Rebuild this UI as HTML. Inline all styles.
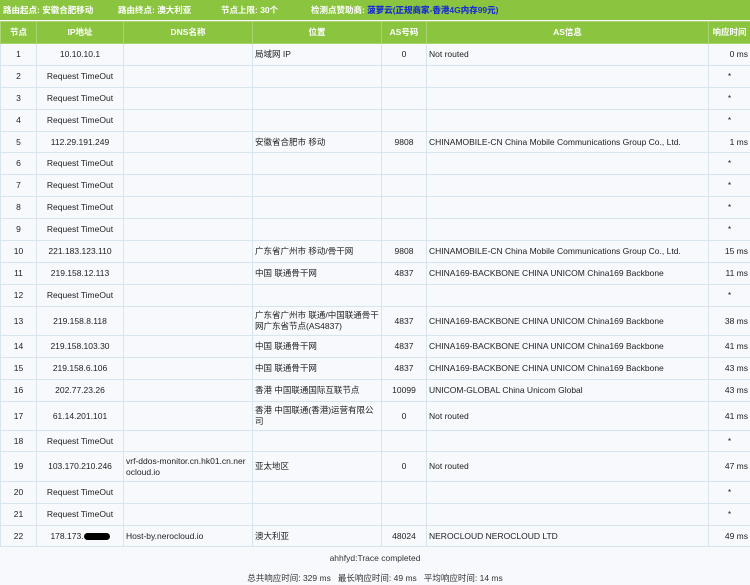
<!DOCTYPE html>
<html><head><meta charset="utf-8"><style>
body{margin:0;width:750px;height:585px;background:#f7f9fc;font-family:"Liberation Sans","Noto Sans CJK SC",sans-serif;font-size:8.5px;color:#222;overflow:hidden}
.top{height:20px;background:#8bc540;color:#fff;font-weight:bold;font-size:8.5px;line-height:20px;white-space:nowrap;border-bottom:1px solid #fff}
.top span{position:absolute;top:0}
.top b{color:#1a2fd0}
table{border-collapse:collapse;width:750px;table-layout:fixed}
td,th{border:1px solid #d8e4ee;text-align:center;padding:0 2px;overflow:hidden;line-height:11px}
th{background:#8bc540;color:#fff;height:21px;border-color:#a9d570}
td.l{text-align:left}
td.r{text-align:right}
td.b{word-break:break-all}
.foot{text-align:center;color:#333}
</style></head><body>
<div class="top"><span style="left:3px">路由起点: 安徽合肥移动</span><span style="left:118px">路由终点: 澳大利亚</span><span style="left:221px">节点上限: 30个</span><span style="left:311px">检测点赞助商: <b>菠萝云(正规商家-香港4G内存99元)</b></span></div>
<table>
<colgroup><col style="width:36px"><col style="width:87px"><col style="width:129px"><col style="width:129px"><col style="width:45px"><col style="width:282px"><col style="width:42px"></colgroup>
<tr><th>节点</th><th>IP地址</th><th>DNS名称</th><th>位置</th><th>AS号码</th><th>AS信息</th><th>响应时间</th></tr>
<tr style="height:22px"><td>1</td><td>10.10.10.1</td><td></td><td class="l">局域网 IP</td><td>0</td><td class="l">Not routed</td><td class="r">0 ms</td></tr>
<tr style="height:22px"><td>2</td><td>Request TimeOut</td><td></td><td></td><td></td><td></td><td>*</td></tr>
<tr style="height:22px"><td>3</td><td>Request TimeOut</td><td></td><td></td><td></td><td></td><td>*</td></tr>
<tr style="height:22px"><td>4</td><td>Request TimeOut</td><td></td><td></td><td></td><td></td><td>*</td></tr>
<tr style="height:21px"><td>5</td><td>112.29.191.249</td><td></td><td class="l">安徽省合肥市 移动</td><td>9808</td><td class="l">CHINAMOBILE-CN China Mobile Communications Group Co., Ltd.</td><td class="r">1 ms</td></tr>
<tr style="height:22px"><td>6</td><td>Request TimeOut</td><td></td><td></td><td></td><td></td><td>*</td></tr>
<tr style="height:22px"><td>7</td><td>Request TimeOut</td><td></td><td></td><td></td><td></td><td>*</td></tr>
<tr style="height:22px"><td>8</td><td>Request TimeOut</td><td></td><td></td><td></td><td></td><td>*</td></tr>
<tr style="height:22px"><td>9</td><td>Request TimeOut</td><td></td><td></td><td></td><td></td><td>*</td></tr>
<tr style="height:22px"><td>10</td><td>221.183.123.110</td><td></td><td class="l">广东省广州市 移动/骨干网</td><td>9808</td><td class="l">CHINAMOBILE-CN China Mobile Communications Group Co., Ltd.</td><td class="r">15 ms</td></tr>
<tr style="height:22px"><td>11</td><td>219.158.12.113</td><td></td><td class="l">中国 联通骨干网</td><td>4837</td><td class="l">CHINA169-BACKBONE CHINA UNICOM China169 Backbone</td><td class="r">11 ms</td></tr>
<tr style="height:22px"><td>12</td><td>Request TimeOut</td><td></td><td></td><td></td><td></td><td>*</td></tr>
<tr style="height:29px"><td>13</td><td>219.158.8.118</td><td></td><td class="l">广东省广州市 联通/中国联通骨干网广东省节点(AS4837)</td><td>4837</td><td class="l">CHINA169-BACKBONE CHINA UNICOM China169 Backbone</td><td class="r">38 ms</td></tr>
<tr style="height:22px"><td>14</td><td>219.158.103.30</td><td></td><td class="l">中国 联通骨干网</td><td>4837</td><td class="l">CHINA169-BACKBONE CHINA UNICOM China169 Backbone</td><td class="r">41 ms</td></tr>
<tr style="height:22px"><td>15</td><td>219.158.6.106</td><td></td><td class="l">中国 联通骨干网</td><td>4837</td><td class="l">CHINA169-BACKBONE CHINA UNICOM China169 Backbone</td><td class="r">43 ms</td></tr>
<tr style="height:22px"><td>16</td><td>202.77.23.26</td><td></td><td class="l">香港 中国联通国际互联节点</td><td>10099</td><td class="l">UNICOM-GLOBAL China Unicom Global</td><td class="r">43 ms</td></tr>
<tr style="height:29px"><td>17</td><td>61.14.201.101</td><td></td><td class="l">香港 中国联通(香港)运营有限公司</td><td>0</td><td class="l">Not routed</td><td class="r">41 ms</td></tr>
<tr style="height:21px"><td>18</td><td>Request TimeOut</td><td></td><td></td><td></td><td></td><td>*</td></tr>
<tr style="height:30px"><td>19</td><td>103.170.210.246</td><td class="l b">vrf-ddos-monitor.cn.hk01.cn.nerocloud.io</td><td class="l">亚太地区</td><td>0</td><td class="l">Not routed</td><td class="r">47 ms</td></tr>
<tr style="height:22px"><td>20</td><td>Request TimeOut</td><td></td><td></td><td></td><td></td><td>*</td></tr>
<tr style="height:22px"><td>21</td><td>Request TimeOut</td><td></td><td></td><td></td><td></td><td>*</td></tr>
<tr style="height:21px"><td>22</td><td>178.173.<span style="display:inline-block;width:26px;height:7px;background:#000;border-radius:4px;vertical-align:middle"></span></td><td class="l">Host-by.nerocloud.io</td><td class="l">澳大利亚</td><td>48024</td><td class="l">NEROCLOUD NEROCLOUD LTD</td><td class="r">49 ms</td></tr>
</table>
<div class="foot" style="margin-top:6px">ahhfyd:Trace completed</div>
<div class="foot" style="margin-top:9px">总共响应时间: 329 ms &nbsp; 最长响应时间: 49 ms &nbsp; 平均响应时间: 14 ms</div>
</body></html>
